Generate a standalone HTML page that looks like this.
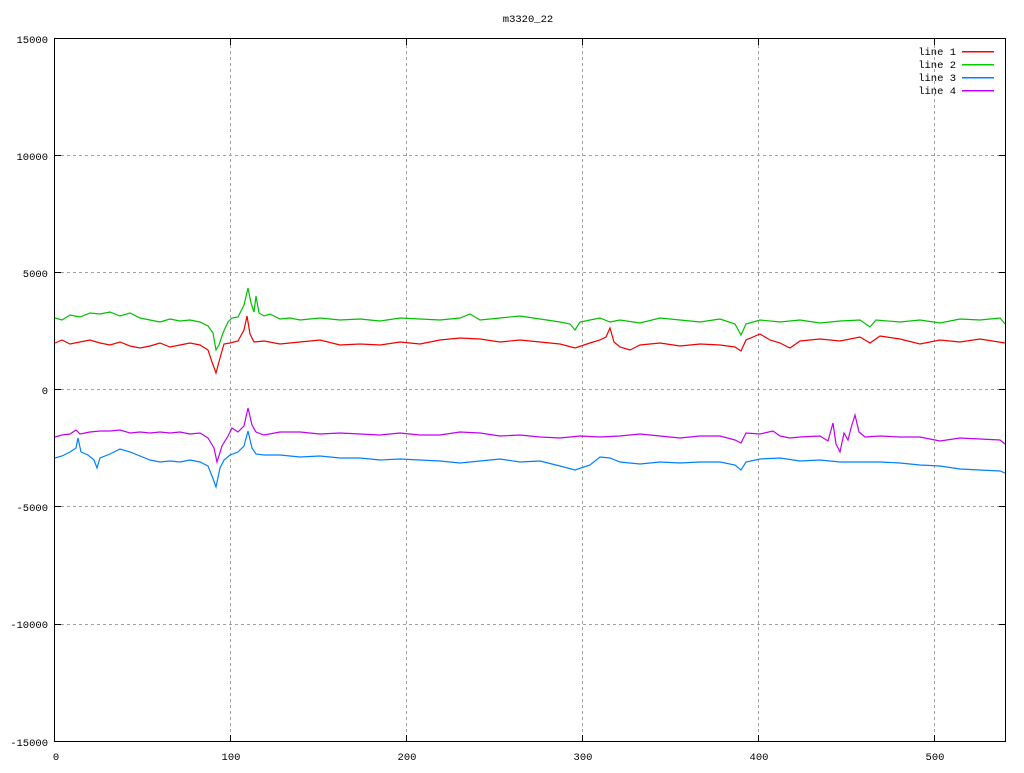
<!DOCTYPE html>
<html><head><style>
body{margin:0;background:#fff;width:1024px;height:768px;overflow:hidden}
text{font-family:"Liberation Mono","DejaVu Sans Mono",monospace;font-size:10.5px;fill:#000}
</style></head><body>
<svg width="1024" height="768" xmlns="http://www.w3.org/2000/svg">
<g stroke="#a0a0a0" stroke-dasharray="3,3" stroke-width="1" fill="none" shape-rendering="crispEdges">
<path d="M55 155.5H1005M55 272.5H1005M55 389.5H1005M55 506.5H1005M55 624.5H1005"/>
<path d="M230.5 39V741M406.5 39V741M582.5 39V741M758.5 39V741M934.5 39V741"/>
</g>
<rect x="54.5" y="38.5" width="951" height="703" fill="none" stroke="#000" shape-rendering="crispEdges"/>
<g stroke="#000" shape-rendering="crispEdges">
<path d="M55 38.5h6M55 155.5h6M55 272.5h6M55 389.5h6M55 506.5h6M55 624.5h6M55 741.5h6M1005 38.5h-6M1005 155.5h-6M1005 272.5h-6M1005 389.5h-6M1005 506.5h-6M1005 624.5h-6M1005 741.5h-6"/>
<path d="M230.5 741v-6M406.5 741v-6M582.5 741v-6M758.5 741v-6M934.5 741v-6M230.5 39v6M406.5 39v6M582.5 39v6M758.5 39v6M934.5 39v6"/>
</g>
<g text-anchor="end">
<text x="48" y="43">15000</text><text x="48" y="160">10000</text><text x="48" y="277">5000</text>
<text x="48" y="394">0</text><text x="48" y="511">-5000</text><text x="48" y="628">-10000</text><text x="48" y="746">-15000</text>
</g>
<g text-anchor="middle">
<text x="56" y="760">0</text><text x="231" y="760">100</text><text x="407" y="760">200</text>
<text x="583" y="760">300</text><text x="759" y="760">400</text><text x="935" y="760">500</text>
<text x="528" y="22">m3320_22</text>
</g>
<g text-anchor="end">
<text x="956" y="55">line 1</text><text x="956" y="68">line 2</text><text x="956" y="81">line 3</text><text x="956" y="94">line 4</text>
</g>
<g stroke-width="1.5" shape-rendering="crispEdges">
<path d="M962 51.5h32" stroke="#f00"/><path d="M962 64.5h32" stroke="#0c0"/><path d="M962 77.5h32" stroke="#0080ff"/><path d="M962 90.5h32" stroke="#c000ff"/>
</g>
<g fill="none" stroke-width="1.2">
<polyline stroke="#00c000" points="55,318 62,320 70,315 80,317 90,313 100,314 110,312 120,316 130,313 140,318 150,320 160,322 170,319 180,321 190,320 200,322 208,326 213,333 216,350 219,345 223,333 228,322 232,318 238,317 244,305 248,288 251,303 254,312 256,296 259,313 264,316 270,314 280,319 290,318 300,320 320,318 340,320 360,319 380,321 400,318 420,319 440,320 460,318 470,314 480,320 500,318 520,316 540,319 560,322 570,324 575,330 580,322 590,320 600,318 610,322 620,320 640,323 660,318 680,320 700,322 720,319 735,324 741,335 746,324 760,320 780,322 800,320 820,323 840,321 860,320 870,327 876,320 900,322 920,320 940,323 960,319 980,320 1000,318 1005,324"/>
<polyline stroke="#f00000" points="55,343 62,340 70,344 80,342 90,340 100,343 110,345 120,342 130,346 140,348 150,346 160,343 170,347 180,345 190,343 200,345 208,350 212,362 216,373 220,358 224,344 230,343 238,341 244,330 247,316 250,334 254,342 264,341 280,344 300,342 320,340 340,345 360,344 380,345 400,342 420,344 440,340 460,338 480,339 500,342 520,340 540,342 560,344 575,348 590,343 600,340 606,337 610,328 614,342 620,347 630,350 640,345 660,343 680,346 700,344 720,345 735,347 741,351 746,340 760,334 770,340 780,343 790,348 800,341 820,339 840,341 860,337 870,343 880,336 900,339 920,344 940,340 960,342 980,339 1005,343"/>
<polyline stroke="#c000f0" points="55,437 62,435 70,434 76,430 80,434 90,432 100,431 110,431 120,430 130,433 140,432 150,433 160,432 170,433 180,432 190,434 200,433 208,438 214,448 217,462 222,446 228,436 232,428 238,432 244,426 248,408 252,425 256,432 264,435 280,432 300,432 320,434 340,433 360,434 380,435 400,433 420,435 440,435 460,432 480,433 500,436 520,435 540,437 560,438 580,436 600,437 620,436 640,434 660,436 680,438 700,436 720,436 735,440 741,443 746,433 760,434 773,431 780,436 790,438 800,437 820,436 828,441 833,423 836,444 840,452 844,433 848,440 851,428 855,415 859,432 865,437 880,436 900,437 920,437 940,441 960,438 980,439 1000,440 1005,444"/>
<polyline stroke="#0080ff" points="55,458 62,456 70,452 76,448 78,438 81,452 88,455 94,460 97,468 100,458 110,454 120,449 130,452 140,456 150,460 160,462 170,461 180,462 190,460 200,462 208,466 212,476 216,487 220,468 224,460 230,455 238,452 244,446 248,431 252,448 256,454 264,455 280,455 300,457 320,456 340,458 360,458 380,460 400,459 420,460 440,461 460,463 480,461 500,459 520,462 540,461 560,466 575,470 590,465 600,457 610,458 620,462 640,464 660,462 680,463 700,462 720,462 735,465 741,470 746,462 760,459 780,458 800,461 820,460 840,462 860,462 880,462 900,463 920,465 940,466 960,469 980,470 1000,471 1005,473"/>
</g>
</svg>
</body></html>
